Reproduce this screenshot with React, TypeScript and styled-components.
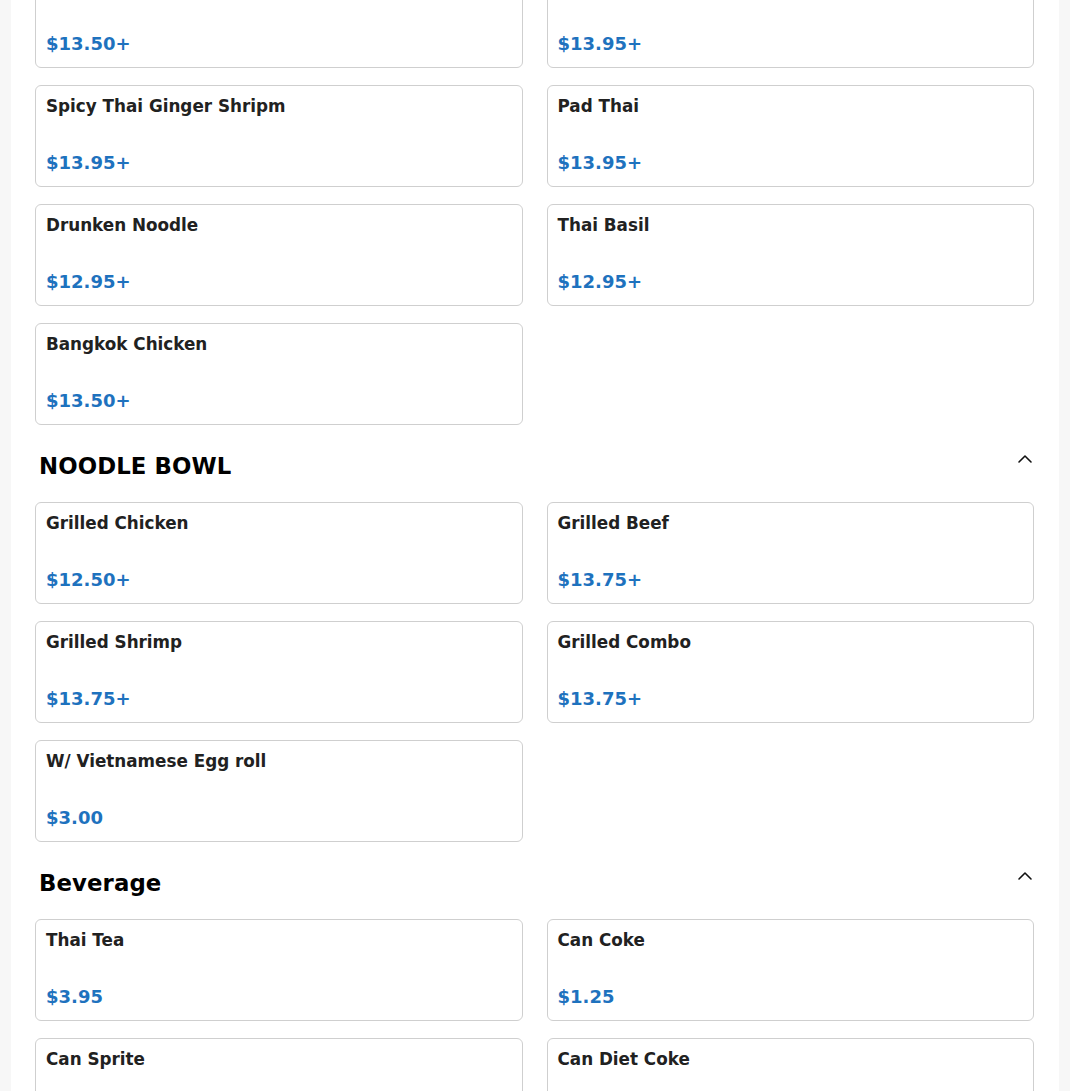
import styled, { createGlobalStyle } from 'styled-components'
import { ChevronUp } from 'lucide-react'

const GlobalStyle = createGlobalStyle`
  html, body {
    margin: 0;
    padding: 0;
    background: #f7f7f7;
    font-family: 'DejaVu Sans', Verdana, sans-serif;
  }
  #root {
    overflow: hidden;
    height: 1091px;
  }
`

type Item = { name: string; price: string }
type Section = { title: string; items: Item[] }

const TOP_ITEMS: Item[] = [
  { name: 'Pad See Ew', price: '$13.50+' },
  { name: 'Spicy Noodle', price: '$13.95+' },
  { name: 'Spicy Thai Ginger Shripm', price: '$13.95+' },
  { name: 'Pad Thai', price: '$13.95+' },
  { name: 'Drunken Noodle', price: '$12.95+' },
  { name: 'Thai Basil', price: '$12.95+' },
  { name: 'Bangkok Chicken', price: '$13.50+' },
]

const SECTIONS: Section[] = [
  {
    title: 'NOODLE BOWL',
    items: [
      { name: 'Grilled Chicken', price: '$12.50+' },
      { name: 'Grilled Beef', price: '$13.75+' },
      { name: 'Grilled Shrimp', price: '$13.75+' },
      { name: 'Grilled Combo', price: '$13.75+' },
      { name: 'W/ Vietnamese Egg roll', price: '$3.00' },
    ],
  },
  {
    title: 'Beverage',
    items: [
      { name: 'Thai Tea', price: '$3.95' },
      { name: 'Can Coke', price: '$1.25' },
      { name: 'Can Sprite', price: '$1.25' },
      { name: 'Can Diet Coke', price: '$1.25' },
    ],
  },
]

const Panel = styled.main`
  max-width: 1048px;
  margin: 0 auto;
  min-height: 1091px;
  background: #ffffff;
  padding: 0 25px 0 24px;
  box-sizing: border-box;
`

const Grid = styled.div<{ offset?: number }>`
  display: grid;
  grid-template-columns: 1fr 1fr;
  column-gap: 24px;
  row-gap: 17px;
  margin-top: ${(p) => (p.offset ? `${p.offset}px` : '0')};
`

const Card = styled.div`
  height: 102px;
  box-sizing: border-box;
  border: 1px solid #cfcfcf;
  border-radius: 6px;
  padding: 10px 10px 12px;
  display: flex;
  flex-direction: column;
  justify-content: space-between;
  background: #fff;
`

const ItemName = styled.div`
  font-size: 16.8px;
  line-height: 20px;
  font-weight: 700;
  color: #212121;
`

const ItemPrice = styled.div`
  font-size: 18px;
  line-height: 22px;
  font-weight: 700;
  color: #1e72be;
`

const SectionHeader = styled.div`
  display: flex;
  align-items: flex-start;
  justify-content: space-between;
  padding: 27px 0 22px 4px;

  h2 {
    margin: 0;
    font-size: 22.8px;
    line-height: 28px;
    font-weight: 700;
    color: #000;
    letter-spacing: 0.1px;
  }

  svg {
    margin-top: -5px;
    margin-right: -3px;
    color: #111;
  }
`

function MenuCard({ name, price }: Item) {
  return (
    <Card>
      <ItemName>{name}</ItemName>
      <ItemPrice>{price}</ItemPrice>
    </Card>
  )
}

export default function App() {
  return (
    <>
      <GlobalStyle />
      <Panel>
        <Grid offset={-34}>
          {TOP_ITEMS.map((item) => (
            <MenuCard key={item.name} {...item} />
          ))}
        </Grid>
        {SECTIONS.map((section) => (
          <section key={section.title}>
            <SectionHeader>
              <h2>{section.title}</h2>
              <ChevronUp size={24} strokeWidth={1.6} />
            </SectionHeader>
            <Grid>
              {section.items.map((item) => (
                <MenuCard key={item.name} {...item} />
              ))}
            </Grid>
          </section>
        ))}
      </Panel>
    </>
  )
}
